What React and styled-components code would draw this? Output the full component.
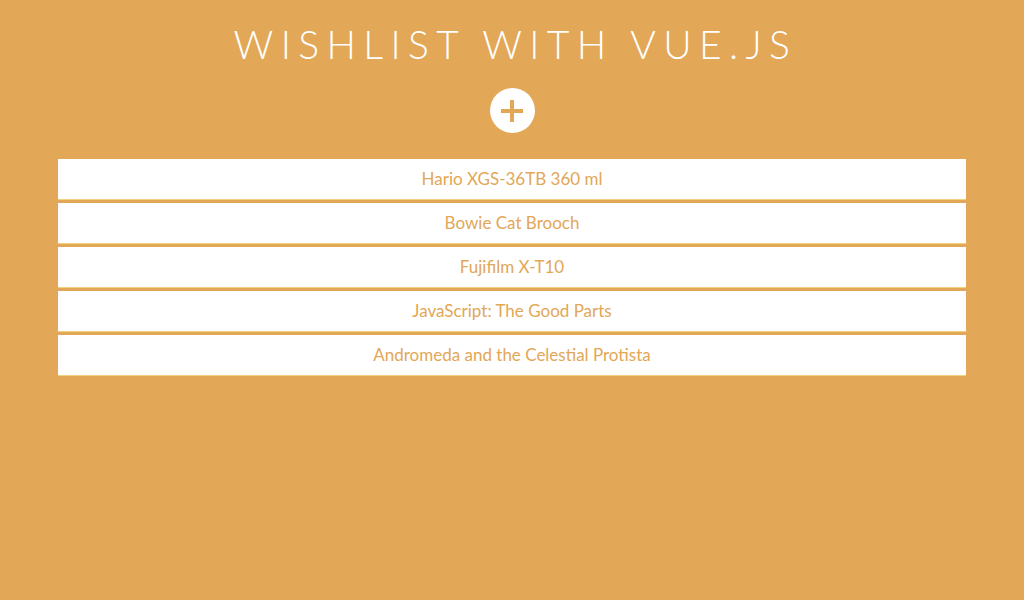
import styled, { createGlobalStyle } from "styled-components";

const GlobalStyle = createGlobalStyle`
	html, body {
		margin: 0;
		padding: 0;
		background: #e2a757;
	}
	body {
		font-family: Lato, "Open Sans", sans-serif;
	}
`;

const Page = styled.div`
	min-height: 600px;
	background: #e2a757;
	display: flex;
	flex-direction: column;
	align-items: center;
	padding: 0 58px;
	box-sizing: border-box;
`;

const Title = styled.h1`
	margin: 22px 0 0;
	font-family: Lato, sans-serif;
	font-weight: 300;
	font-size: 39px;
	line-height: 44px;
	letter-spacing: 7.4px;
	color: #ffffff;
	text-transform: uppercase;
	padding-left: 7px;
`;

const AddButton = styled.button`
	margin-top: 22px;
	width: 45px;
	height: 45px;
	border-radius: 50%;
	border: none;
	background: #ffffff;
	padding: 0;
	display: flex;
	align-items: center;
	justify-content: center;
	cursor: pointer;
`;

const List = styled.ul`
	list-style: none;
	margin: 26px 0 0;
	padding: 0;
	width: 100%;
	display: flex;
	flex-direction: column;
	gap: 3px;
`;

const Item = styled.li`
	height: 41px;
	padding-bottom: 2px;
	box-sizing: border-box;
	background: #ffffff;
	border-bottom: 1px solid #f2d27f;
	display: flex;
	align-items: center;
	justify-content: center;
	font-size: 17px;
	color: #e2a757;
`;

const items = [
	"Hario XGS-36TB 360 ml",
	"Bowie Cat Brooch",
	"Fujifilm X-T10",
	"JavaScript: The Good Parts",
	"Andromeda and the Celestial Protista",
];

const App = () => {
	return (
		<Page>
			<GlobalStyle />
			<Title>Wishlist with Vue.js</Title>
			<AddButton aria-label="Add item">
				<svg width="24" height="24" viewBox="0 0 24 24">
					<path d="M12 1v22M1 12h22" stroke="#e2a757" strokeWidth="4" />
				</svg>
			</AddButton>
			<List>
				{items.map((item) => (
					<Item key={item}>{item}</Item>
				))}
			</List>
		</Page>
	);
};

export default App;
